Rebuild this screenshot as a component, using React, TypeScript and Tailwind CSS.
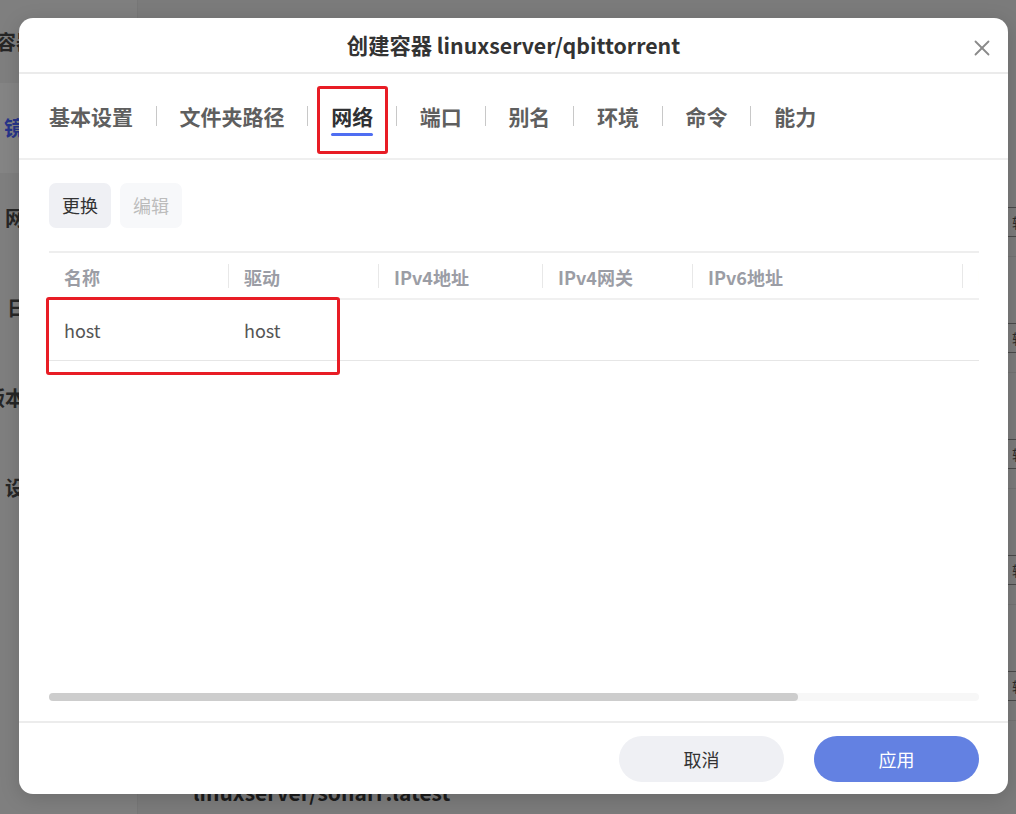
import { X } from 'lucide-react';

const TABS = ['基本设置', '文件夹路径', '网络', '端口', '别名', '环境', '命令', '能力'];
const ACTIVE_TAB = '网络';

const COLUMNS = [
  { label: '名称', width: 'w-[180px]' },
  { label: '驱动', width: 'w-[150px]' },
  { label: 'IPv4地址', width: 'w-[164px]' },
  { label: 'IPv4网关', width: 'w-[150px]' },
  { label: 'IPv6地址', width: 'w-[270px]' },
  { label: 'MAC地址', width: 'w-[200px]' },
];

const SIDE_ITEMS = [
  { label: '本地容器', h: 'h-[83px]', shift: 'ml-[-44px]', active: false },
  { label: '镜像', h: 'h-[90px]', shift: 'ml-[4px]', active: true },
  { label: '网络', h: 'h-[90px]', shift: 'ml-[5px]', active: false },
  { label: '日志', h: 'h-[90px]', shift: 'ml-[7px]', active: false },
  { label: '版本', h: 'h-[90px]', shift: 'ml-[-15px]', active: false },
  { label: '设置', h: 'h-[90px]', shift: 'ml-[5px]', active: false },
];

function Backdrop() {
  return (
    <div className="flex h-full">
      {/* Sidebar (dimmed) */}
      <div className="w-[138px] shrink-0 bg-[#7f7f7f] border-r border-[#777777] overflow-hidden">
        {SIDE_ITEMS.map((item) => (
          <div
            key={item.label}
            className={`${item.h} flex items-center ${item.active ? 'bg-[#858585]' : ''}`}
          >
            <span
              className={`${item.shift} whitespace-nowrap text-[20px] font-bold ${
                item.active ? 'text-[#27348a]' : 'text-[#262626]'
              }`}
            >
              {item.label}
            </span>
          </div>
        ))}
      </div>

      {/* Main list (dimmed) */}
      <div className="flex-1 flex flex-col bg-[#7b7b7b]">
        <div className="h-[207px]" />
        {[0, 1, 2, 3, 4].map((i) => (
          <div key={i} className="h-[116px] flex flex-col">
            <div className="h-[30px] border-y border-[#4a4a4a] flex items-center justify-end">
              <span className="mr-[-10px] text-[14px] text-[#2a2a2a]">辑</span>
            </div>
            <div className="h-[20px] border-b border-[#727272]" />
          </div>
        ))}
        <div className="flex-1" />
        <div className="pl-[55px] h-[26px]">
          <span className="block translate-y-[-9px] text-[21px] font-bold leading-[26px] text-[#1c1c1c]">
            linuxserver/sonarr:latest
          </span>
        </div>
      </div>
    </div>
  );
}

function Tabs() {
  return (
    <div className="h-[86px] shrink-0 border-b-2 border-[#efefef] flex items-center pl-[30px] gap-[22.8px]">
      {TABS.map((tab, i) => (
        <div key={tab} className="flex items-center gap-[22.8px]">
          {i > 0 && <span className="w-px h-[20px] bg-[#c8c8c8]" />}
          <span
            className={`relative text-[21px] font-bold leading-[28px] ${
              tab === ACTIVE_TAB ? 'text-[#303133]' : 'text-[#5f5f5f]'
            }`}
          >
            {tab}
            {tab === ACTIVE_TAB && (
              <span className="absolute left-0 right-0 top-[calc(100%+3px)] h-[3px] rounded-full bg-[#4f6ef2]" />
            )}
          </span>
        </div>
      ))}
    </div>
  );
}

function NetworkTable() {
  return (
    <div className="mt-[23px] w-[930px] overflow-hidden border-t-2 border-[#eeeeee]">
      <div className="w-[1160px]">
        {/* Header */}
        <div className="h-[47px] flex border-b-2 border-[#f0f0f0]">
          {COLUMNS.map((col) => (
            <div key={col.label} className={`${col.width} shrink-0 flex items-center justify-between`}>
              <span className="pl-[15px] pt-[4px] text-[18px] font-bold text-[#9b9da5]">{col.label}</span>
              <span className="w-px h-[24px] bg-[#e8e8e8]" />
            </div>
          ))}
        </div>
        {/* Row */}
        <div className="h-[61px] flex border-b border-[#e6e6e6]">
          <div className="w-[180px] shrink-0 flex items-center pl-[15px] text-[18px] text-[#555555]">host</div>
          <div className="w-[150px] shrink-0 flex items-center pl-[15px] text-[18px] text-[#555555]">host</div>
        </div>
      </div>
    </div>
  );
}

function CreateContainerModal() {
  return (
    <div className="absolute left-[19px] top-[18px] w-[989px] h-[776px] bg-white rounded-[14px] overflow-hidden flex flex-col shadow-[0_4px_20px_rgba(0,0,0,0.15)]">
      {/* Title */}
      <div className="relative h-[56px] shrink-0 flex items-center justify-center border-b-2 border-[#ebebeb]">
        <span className="text-[21.3px] font-bold text-[#333333]">创建容器 linuxserver/qbittorrent</span>
        <button className="absolute right-[13px] top-[17px] text-[#8a8a8a]">
          <X size={26} strokeWidth={1.7} />
        </button>
      </div>

      <Tabs />

      {/* Body */}
      <div className="flex-1 flex flex-col pl-[30px] pr-[29px] pt-[23px] pb-[20px]">
        <div className="flex gap-[9px]">
          <button className="w-[62px] h-[45px] rounded-[7px] bg-[#eff0f4] text-[18px] text-[#333333]">更换</button>
          <button className="w-[62px] h-[45px] rounded-[7px] bg-[#f7f8fa] text-[18px] text-[#bcbcbc]">编辑</button>
        </div>
        <NetworkTable />
        <div className="flex-1" />
        {/* Horizontal scrollbar */}
        <div className="h-[8px] w-[930px] rounded-full bg-[#f7f7f7]">
          <div className="h-full w-[749px] rounded-full bg-[#cdcdcd]" />
        </div>
      </div>

      {/* Footer */}
      <div className="h-[73px] shrink-0 border-t-2 border-[#ececec] flex items-start justify-end gap-[30px] pt-[13px] pr-[29px]">
        <button className="w-[165px] h-[46px] rounded-full bg-[#eff0f4] text-[18px] text-[#333333]">取消</button>
        <button className="w-[165px] h-[46px] rounded-full bg-[#6381e2] text-[18px] text-white">应用</button>
      </div>

      {/* Annotation boxes */}
      <div className="absolute left-[298px] top-[68px] w-[71px] h-[68px] border-[3px] border-[#e81d25] rounded-[3px]" />
      <div className="absolute left-[27px] top-[279px] w-[294px] h-[78px] border-[3px] border-[#e81d25] rounded-[3px]" />
    </div>
  );
}

export default function App() {
  return (
    <div className="relative w-[1016px] h-[814px] overflow-hidden font-['Noto_Sans_CJK_SC','Noto_Sans',sans-serif]">
      <Backdrop />
      <CreateContainerModal />
    </div>
  );
}
